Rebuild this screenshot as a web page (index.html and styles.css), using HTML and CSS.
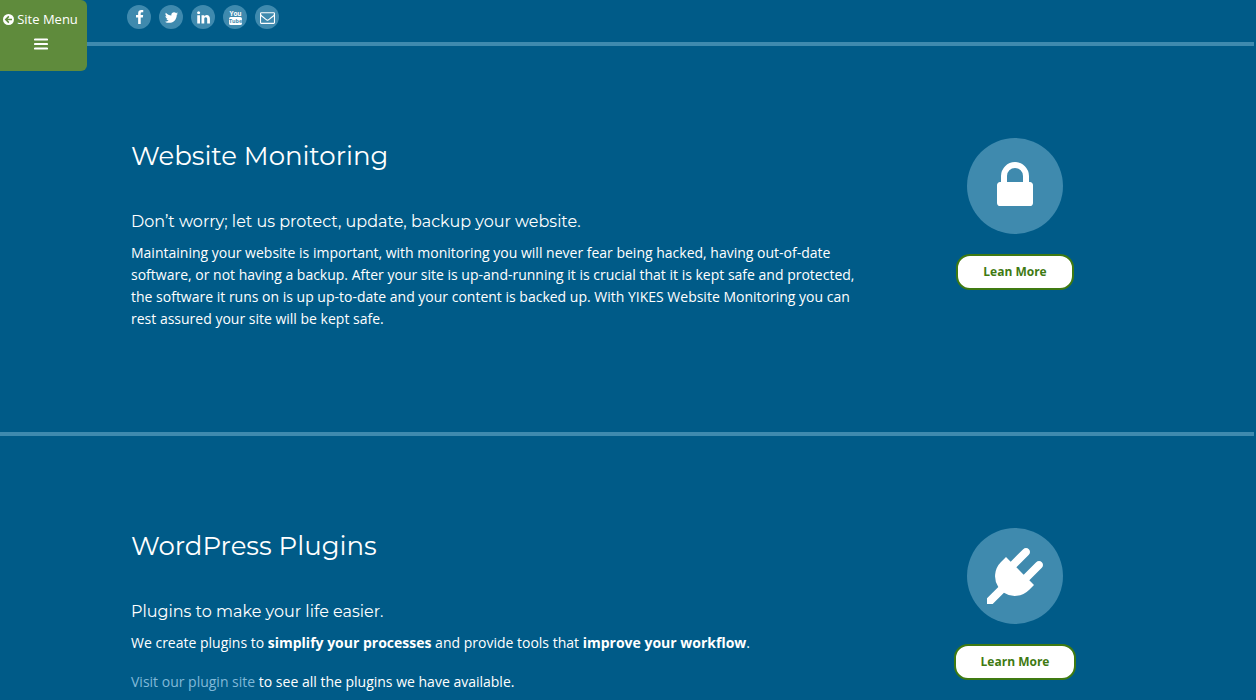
FILE: index.html
```html
<!DOCTYPE html>
<html lang="en">
<head>
  <meta charset="UTF-8" />
  <meta name="viewport" content="width=device-width, initial-scale=1.0"/>
  <title>Our Services</title>
  <link rel="stylesheet" href="styles.css">
</head>
<body>
  <button class="site-menu" type="button">
    <span class="site-menu-label">
      <svg class="arrow-icon" viewBox="0 0 12 12" aria-hidden="true">
        <circle cx="6" cy="6" r="6" fill="#fff"/>
        <path d="M6.400 2.600L3 6l3.400 3.400M3.200 6h6.600" fill="none" stroke="#5f8b3c" stroke-width="1.700"/>
      </svg>
      Site Menu
    </span>
    <svg class="bars-icon" viewBox="0 0 14 12" aria-hidden="true">
      <path d="M1 1.500h12M1 6h12M1 10.500h12" stroke="#fff" stroke-width="2.200" stroke-linecap="round"/>
    </svg>
  </button>

  <header class="top-bar">
    <nav class="container social">
      <a href="#" aria-label="Facebook"><svg viewBox="0 0 1792 1792"><path d="M1343 12v264h-157q-86 0-116 36t-30 108v189h293l-39 296h-254v759h-306v-759h-255v-296h255v-218q0-186 104-288.500t277-102.500q147 0 228 12z"/></svg></a>
      <a href="#" aria-label="Twitter"><svg viewBox="0 0 1792 1792"><path d="M1684 408q-67 98-162 167 1 14 1 42 0 130-38 259.500t-115.500 248.500-184.500 210.500-258 146-323 54.500q-271 0-496-145 35 4 78 4 225 0 401-138-105-2-188-64.500t-114-159.500q33 5 61 5 43 0 85-11-112-23-185.500-111.500t-73.500-205.500v-4q68 38 146 41-66-44-105-115t-39-154q0-88 44-163 121 149 294.500 238.500t371.500 99.500q-8-38-8-74 0-134 94.500-228.500t228.500-94.500q140 0 236 102 109-21 205-78-37 115-142 178 93-10 186-50z"/></svg></a>
      <a href="#" aria-label="LinkedIn"><svg viewBox="0 0 1792 1792"><path d="M477 625v991h-330v-991h330zm21-306q1 73-50.500 122t-135.500 49h-2q-82 0-132-49t-50-122q0-74 51.500-122.500t134.500-48.500 133 48.500 51 122.500zm1166 729v568h-329v-530q0-105-40.500-164.500t-126.500-59.500q-63 0-105.500 34.500t-63.500 85.500q-11 30-11 81v553h-329q2-399 2-647t-1-296l-1-48h329v144h-2q20-32 41-56t56.500-52 87-43.500 114.500-15.500q171 0 275 113.500t104 332.500z"/></svg></a>
      <a href="#" aria-label="YouTube"><svg viewBox="0 0 14 14"><text class="yt-you" x="7" y="5.500" text-anchor="middle">You</text><rect x="1" y="6.500" width="12" height="7.500" rx="1.500"/><text class="yt-tube" x="7" y="12" text-anchor="middle">Tube</text></svg></a>
      <a href="#" aria-label="Email"><svg viewBox="0 0 1792 1792"><path d="M1664 1504v-768q-32 36-69 66-268 206-426 338-51 43-83 67t-86.500 48.500-102.500 24.500h-2q-48 0-102.500-24.500t-86.500-48.500-83-67q-158-132-426-338-37-30-69-66v768q0 13 9.500 22.500t22.500 9.500h1472q13 0 22.500-9.500t9.500-22.500zm0-1051v-24.500l-.5-13-3-12.500-5.500-9-9-7.500-14-2.500h-1472q-13 0-22.500 9.500t-9.500 22.500q0 168 147 284 193 152 401 317 6 5 35 29.500t46 37.500 44.500 31.500 50.500 27.500 43 9h2q20 0 43-9t50.500-27.500 44.500-31.500 46-37.500 35-29.500q208-165 401-317 54-43 100.500-115.500t46.500-131.500zm128-37v1088q0 66-47 113t-113 47h-1472q-66 0-113-47t-47-113v-1088q0-66 47-113t113-47h1472q66 0 113 47t47 113z"/></svg></a>
    </nav>
  </header>

  <main>
    <section class="service">
      <div class="container service-row">
        <div class="service-text">
          <h2>Website Monitoring</h2>
          <h3>Don’t worry; let us protect, update, backup your website.</h3>
          <p>Maintaining your website is important, with monitoring you will never fear being hacked, having out-of-date software, or not having a backup. After your site is up-and-running it is crucial that it is kept safe and protected, the software it runs on is up up-to-date and your content is backed up. With YIKES Website Monitoring you can rest assured your site will be kept safe.</p>
        </div>
        <div class="service-action">
          <span class="service-icon"><svg viewBox="0 0 1792 1792" aria-hidden="true"><path d="M640 768h512v-192q0-106-75-181t-181-75-181 75-75 181v192zm832 96v576q0 40-28 68t-68 28h-960q-40 0-68-28t-28-68v-576q0-40 28-68t68-28h32v-192q0-184 132-316t316-132 316 132 132 316v192h32q40 0 68 28t28 68z"/></svg></span>
          <a class="btn" href="#">Lean More</a>
        </div>
      </div>
    </section>

    <section class="service">
      <div class="container service-row">
        <div class="service-text">
          <h2>WordPress Plugins</h2>
          <h3>Plugins to make your life easier.</h3>
          <p>We create plugins to <strong>simplify your processes</strong> and provide tools that <strong>improve your workflow</strong>.</p>
          <p><a href="#">Visit our plugin site</a> to see all the plugins we have available.</p>
        </div>
        <div class="service-action">
          <span class="service-icon"><svg viewBox="0 0 1792 1792" aria-hidden="true"><path d="M1755 453q37 38 37 90.500t-37 90.500l-401 400 150 150-160 160q-163 163-389.500 186.500t-411.500-100.500l-362 362h-181v-181l362-362q-124-185-100.500-411.500t186.500-389.500l160-160 150 150 400-401q38-37 91-37t90 37 37 90.500-37 90.500l-400 401 234 234 401-400q38-37 91-37t90 37z"/></svg></span>
          <a class="btn" href="#">Learn More</a>
        </div>
      </div>
    </section>
  </main>
</body>
</html>
```
FILE: styles.css
```css
* {
  box-sizing: border-box;
}
body {
  margin: 0;
  padding-right: 2px;
  background: #005b88;
  color: #fff;
  font-family: "Open Sans", sans-serif;
  font-size: 14px;
  line-height: 22px;
}
.container {
  max-width: 992px;
  margin: 0 auto;
}

/* menu tab stays on top of the page */
.site-menu {
  position: fixed;
  top: 0;
  left: 0;
  width: 87px;
  height: 71px;
  padding: 8px 10px 0 4px;
  border: none;
  border-radius: 0 6px 6px 0;
  background: #5f8b3c;
  color: #fff;
  font-family: inherit;
  font-size: 13px;
  line-height: 22px;
  display: flex;
  flex-direction: column;
  align-items: center;
  gap: 8px;
  cursor: pointer;
}
.site-menu-label {
  display: flex;
  align-items: center;
  gap: 3px;
  white-space: nowrap;
}
.arrow-icon {
  width: 11px;
  height: 11px;
}
.bars-icon {
  width: 14px;
  height: 12px;
}

.top-bar {
  padding: 5px 0 13px;
  border-bottom: 4px solid #3f8aae;
}
.social {
  display: flex;
  gap: 8px;
}
.social a {
  width: 24px;
  height: 24px;
  border-radius: 50%;
  background: #3f8aae;
  display: flex;
  align-items: center;
  justify-content: center;
  margin-left: -4px;
  margin-right: 4px;
}
.social svg {
  width: 15px;
  height: 15px;
  fill: #fff;
  overflow: visible;
}
.yt-you,
.yt-tube {
  font-family: "Liberation Sans Narrow", "Open Sans", sans-serif;
  font-weight: bold;
}
.yt-you {
  font-size: 6px;
}
.yt-tube {
  font-size: 5px;
  fill: #3f8aae;
}

.service {
  padding: 92px 0 80px;
  min-height: 390px;
  border-bottom: 4px solid #3f8aae;
}
.service-row {
  display: grid;
  grid-template-columns: 1fr 216px;
  gap: 48px;
}
h2,
h3 {
  margin: 0;
  font-family: Montserrat, Inter, sans-serif;
}
h2 {
  margin-bottom: 38px;
  font-size: 26px;
  line-height: 36px;
  font-weight: 400;
}
h3 {
  margin-bottom: 10px;
  font-size: 16px;
  line-height: 20px;
  font-weight: 400;
}
p {
  margin: 0 0 17px;
}
p a {
  color: #80b9d8;
  text-decoration: none;
}
.service-action {
  display: flex;
  flex-direction: column;
  align-items: center;
  gap: 20px;
}
.service-icon {
  width: 96px;
  height: 96px;
  border-radius: 50%;
  background: #3f8aae;
  display: flex;
  align-items: center;
  justify-content: center;
}
.service-icon svg {
  width: 56px;
  height: 56px;
  fill: #fff;
}
.btn {
  padding: 6px 25px;
  border: 2px solid #3f7a12;
  border-radius: 14px;
  background: #fff;
  color: #3f7a12;
  font-size: 12px;
  line-height: 20px;
  font-weight: bold;
  text-decoration: none;
}
```
